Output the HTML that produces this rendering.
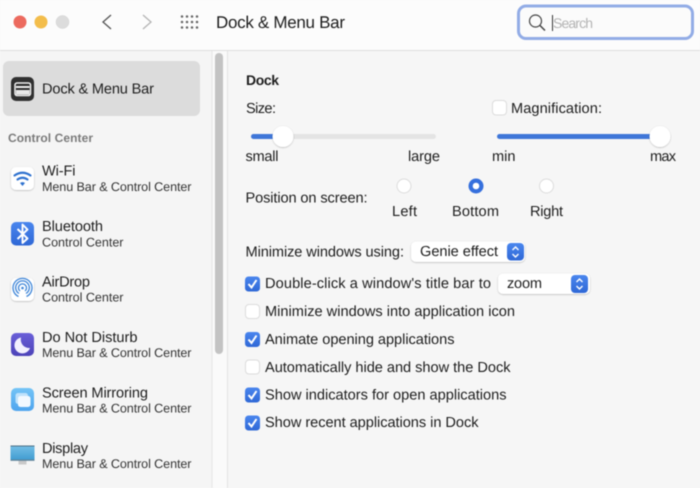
<!DOCTYPE html>
<html>
<head>
<meta charset="utf-8">
<style>
html,body{margin:0;padding:0;width:700px;height:488px;overflow:hidden;background:#f6f6f6}
svg{display:block;filter:blur(.4px)}
text{font-family:"Liberation Sans",sans-serif;fill:#1e1e1e;font-size:14.6px;text-rendering:geometricPrecision}
.s{font-size:12.6px;fill:#333}
.t{font-size:14.6px}
.b{font-weight:bold}
</style>
</head>
<body>
<svg width="700" height="488" viewBox="0 0 700 488" xmlns="http://www.w3.org/2000/svg">
<defs>
<linearGradient id="blue" x1="0" y1="0" x2="0" y2="1"><stop offset="0" stop-color="#4a86ee"/><stop offset="1" stop-color="#2f68d6"/></linearGradient>
<linearGradient id="purple" x1="0" y1="0" x2="0" y2="1"><stop offset="0" stop-color="#6a5fd8"/><stop offset="1" stop-color="#4c43b8"/></linearGradient>
<linearGradient id="sky" x1="0" y1="0" x2="0" y2="1"><stop offset="0" stop-color="#74c4f6"/><stop offset="1" stop-color="#4ea4ee"/></linearGradient>
<linearGradient id="disp" x1="0" y1="0" x2="0" y2="1"><stop offset="0" stop-color="#75bfe6"/><stop offset="1" stop-color="#3f9bd0"/></linearGradient>
<filter id="sh" x="-30%" y="-30%" width="160%" height="160%"><feDropShadow dx="0" dy=".6" stdDeviation=".7" flood-color="#000" flood-opacity=".28"/></filter>
</defs>

<!-- backgrounds -->
<rect width="700" height="488" fill="#f6f6f6"/>
<rect width="700" height="50" fill="#fcfcfc"/>
<rect y="50" width="700" height="1" fill="#dedede"/>
<rect x="0" y="51" width="212" height="437" fill="#f5f5f5"/>
<rect x="212" y="51" width="15" height="437" fill="#fafafa"/>
<rect x="211.5" y="51" width="1" height="437" fill="#e6e6e6"/>
<rect x="227" y="51" width="1" height="437" fill="#e2e2e2"/>
<rect x="215" y="53" width="8" height="301" rx="4" fill="#c3c3c3"/>

<!-- traffic lights -->
<circle cx="20" cy="22" r="6.5" fill="#ec6a5e"/>
<circle cx="41" cy="22" r="6.5" fill="#f3bd4b"/>
<circle cx="62.500" cy="22" r="6.5" fill="#dcdcdc" stroke="#d2d2d2" stroke-width=".5"/>

<!-- nav -->
<path d="M111 15 L103 22 L111 29" fill="none" stroke="#555" stroke-width="1.300"/>
<path d="M143 15 L151 22 L143 29" fill="none" stroke="#b4b4b4" stroke-width="1.300"/>
<g fill="#666">
<circle cx="182" cy="16.500" r="1.250"/><circle cx="187" cy="16.500" r="1.250"/><circle cx="192" cy="16.500" r="1.250"/><circle cx="197" cy="16.500" r="1.250"/>
<circle cx="182" cy="22" r="1.250"/><circle cx="187" cy="22" r="1.250"/><circle cx="192" cy="22" r="1.250"/><circle cx="197" cy="22" r="1.250"/>
<circle cx="182" cy="27.500" r="1.250"/><circle cx="187" cy="27.500" r="1.250"/><circle cx="192" cy="27.500" r="1.250"/><circle cx="197" cy="27.500" r="1.250"/>
</g>
<text x="216" y="28" style="font-size:17px" textLength="129" lengthAdjust="spacing">Dock &amp; Menu Bar</text>

<!-- search -->
<rect x="518.500" y="6" width="174" height="32.500" rx="7.500" fill="#fbfbfb" stroke="#92ace6" stroke-width="3"/>
<circle cx="535.500" cy="21" r="6" fill="none" stroke="#444" stroke-width="1.200"/>
<path d="M540 25.500 L545 30.500" stroke="#444" stroke-width="1.500"/>
<rect x="552" y="15" width="1" height="16" fill="#333"/>
<text x="553" y="28" style="font-size:14px;fill:#b4b4b4" textLength="40" lengthAdjust="spacing">Search</text>

<!-- sidebar -->
<rect x="3" y="61" width="197" height="55" rx="6" fill="#dcdcdc"/>
<rect x="11" y="77" width="23" height="24" rx="5" fill="#303030"/>
<rect x="15" y="83" width="15.500" height="12.500" rx="2" fill="#2b2b2b" stroke="#f2f2f2" stroke-width="1.500"/>
<rect x="16" y="86" width="13.500" height="2" fill="#f2f2f2"/>
<rect x="16" y="90" width="13.500" height="4.500" fill="#e8e8e8"/>
<text x="42" y="93.500" class="t" textLength="112" lengthAdjust="spacing">Dock &amp; Menu Bar</text>

<text x="8" y="142" class="b" style="font-size:12px;fill:#7a7a7a" textLength="85" lengthAdjust="spacing">Control Center</text>

<!-- wifi -->
<rect x="11" y="167" width="23" height="23" rx="5" fill="#fff" filter="url(#sh)"/>
<path d="M14.500 175.500 Q22.500 170 30.500 175.500" fill="none" stroke="#2f72cf" stroke-width="2.100" stroke-linecap="round"/>
<path d="M17.500 179.500 Q22.500 176 27.500 179.500" fill="none" stroke="#2f72cf" stroke-width="2.100" stroke-linecap="round"/>
<path d="M20 183 L22.500 186 L25 183 Q22.500 181.200 20 183 Z" fill="#2f72cf"/>
<text x="42" y="175.500" class="t" textLength="33.500" lengthAdjust="spacing">Wi-Fi</text>
<text x="42" y="191" class="s" textLength="149.500" lengthAdjust="spacing">Menu Bar &amp; Control Center</text>

<!-- bluetooth -->
<rect x="11" y="222" width="23" height="23.500" rx="5" fill="url(#blue)"/>
<path d="M17.500 229 L27.500 238.500 L22.500 243 L22.500 224.500 L27.500 229.500 L17.500 239" fill="none" stroke="#fff" stroke-width="1.900" stroke-linejoin="round"/>
<text x="42" y="231" class="t" textLength="61" lengthAdjust="spacing">Bluetooth</text>
<text x="42" y="246.500" class="s" textLength="81.500" lengthAdjust="spacing">Control Center</text>

<!-- airdrop -->
<rect x="11" y="278" width="23" height="23" rx="5" fill="#fff" filter="url(#sh)"/>
<g fill="none" stroke="#3f86d8">
<path d="M18.500 296.500 A9.500 9.500 0 1 1 26.500 296.500" stroke-width="1.300"/>
<path d="M19 293.500 A6.800 6.800 0 1 1 26 293.500" stroke-width="1.300"/>
<path d="M20 291 A4 4 0 1 1 25 291" stroke-width="1.300"/>
</g>
<circle cx="22.500" cy="288" r="1.300" fill="#3f86d8"/>
<text x="42" y="286.500" class="t" textLength="48" lengthAdjust="spacing">AirDrop</text>
<text x="42" y="301.500" class="s" textLength="81.500" lengthAdjust="spacing">Control Center</text>

<!-- dnd -->
<rect x="11" y="333" width="23" height="23" rx="5" fill="url(#purple)"/>
<path d="M21 337.500 A8 8 0 1 0 30 348 A8.500 8.500 0 0 1 21 337.500 Z" fill="#f3f1ff"/>
<text x="42" y="342" class="t" textLength="95.500" lengthAdjust="spacing">Do Not Disturb</text>
<text x="42" y="357" class="s" textLength="149.500" lengthAdjust="spacing">Menu Bar &amp; Control Center</text>

<!-- mirroring -->
<rect x="11" y="388" width="23" height="23" rx="5" fill="url(#sky)"/>
<rect x="15.500" y="393" width="12.500" height="11" rx="2.500" fill="#bfe2fb"/>
<rect x="18" y="396" width="12.500" height="11" rx="2.500" fill="#f2f9ff"/>
<text x="42" y="397.500" class="t" textLength="106" lengthAdjust="spacing">Screen Mirroring</text>
<text x="42" y="412.500" class="s" textLength="149.500" lengthAdjust="spacing">Menu Bar &amp; Control Center</text>

<!-- display -->
<rect x="18.500" y="459" width="8" height="5.500" fill="#c9c9c9"/>
<rect x="10.500" y="445.500" width="24" height="15" rx="1" fill="url(#disp)"/>
<rect x="10.500" y="445.500" width="24" height="1" fill="#4d6f85"/>
<rect x="10.500" y="459.500" width="24" height="1.300" fill="#5d8198"/>
<text x="42" y="453" class="t" textLength="46" lengthAdjust="spacing">Display</text>
<text x="42" y="468" class="s" textLength="149.500" lengthAdjust="spacing">Menu Bar &amp; Control Center</text>

<!-- content -->
<text x="246" y="85" class="b" style="font-size:14px" textLength="33" lengthAdjust="spacing">Dock</text>
<text x="246" y="113" class="t" textLength="30" lengthAdjust="spacing">Size:</text>

<rect x="492.500" y="100.500" width="14" height="14.500" rx="3.500" fill="#fff" stroke="#dcdcdc"/>
<text x="511" y="113" class="t" textLength="91" lengthAdjust="spacing">Magnification:</text>

<!-- sliders -->
<rect x="251" y="134" width="185" height="5" rx="2.500" fill="#e4e4e4"/>
<rect x="251" y="134" width="30" height="5" rx="2.500" fill="#3f76d8"/>
<circle cx="283" cy="136.500" r="10.500" fill="#fff" filter="url(#sh)"/>
<text x="245.500" y="161" class="t" textLength="33" lengthAdjust="spacing">small</text>
<text x="408" y="161" class="t" textLength="32" lengthAdjust="spacing">large</text>

<rect x="497" y="134" width="160" height="5" rx="2.500" fill="#3f76d8"/>
<circle cx="660" cy="136.500" r="10.500" fill="#fff" filter="url(#sh)"/>
<text x="492" y="161" class="t" textLength="23.500" lengthAdjust="spacing">min</text>
<text x="650" y="161" class="t" textLength="26" lengthAdjust="spacing">max</text>

<!-- radios -->
<text x="245.500" y="202.500" class="t" textLength="122" lengthAdjust="spacing">Position on screen:</text>
<circle cx="404" cy="186" r="7" fill="#fff" stroke="#dcdcdc"/>
<circle cx="476" cy="186" r="7.500" fill="#3670dd"/>
<circle cx="476" cy="186" r="3.300" fill="#fff"/>
<circle cx="546.500" cy="186" r="7" fill="#fff" stroke="#dcdcdc"/>
<text x="392" y="216" class="t" textLength="25" lengthAdjust="spacing">Left</text>
<text x="452" y="216" class="t" textLength="47" lengthAdjust="spacing">Bottom</text>
<text x="530" y="216" class="t" textLength="33" lengthAdjust="spacing">Right</text>

<!-- popups -->
<text x="245.500" y="256.500" class="t" textLength="158.500" lengthAdjust="spacing">Minimize windows using:</text>
<rect x="411" y="241.500" width="114" height="20.500" rx="5" fill="#fff" filter="url(#sh)"/>
<text x="420" y="256" class="t" textLength="78" lengthAdjust="spacing">Genie effect</text>
<rect x="507" y="243" width="17" height="17.500" rx="4" fill="url(#blue)"/>
<path d="M512.500 250 L515.500 247 L518.500 250 M512.500 254 L515.500 257 L518.500 254" fill="none" stroke="#fff" stroke-width="1.400"/>

<rect x="245" y="276.500" width="15" height="15" rx="3.500" fill="url(#blue)"/>
<path d="M248.500 284 L251.500 287.500 L256.500 280" fill="none" stroke="#fff" stroke-width="2"/>
<text x="265" y="288" class="t" textLength="226" lengthAdjust="spacing">Double-click a window's title bar to</text>
<rect x="498" y="273.500" width="92" height="20.500" rx="5" fill="#fff" filter="url(#sh)"/>
<text x="507" y="288" class="t" textLength="35" lengthAdjust="spacing">zoom</text>
<rect x="571" y="275" width="17" height="18" rx="4" fill="url(#blue)"/>
<path d="M576.500 282 L579.500 279 L582.500 282 M576.500 286 L579.500 289 L582.500 286" fill="none" stroke="#fff" stroke-width="1.400"/>

<!-- checkboxes -->
<rect x="245.500" y="304.500" width="14" height="14" rx="3.500" fill="#fff" stroke="#dcdcdc"/>
<text x="265" y="316" class="t" textLength="250" lengthAdjust="spacing">Minimize windows into application icon</text>

<rect x="245" y="332" width="15" height="15" rx="3.500" fill="url(#blue)"/>
<path d="M248.500 339.500 L251.500 343 L256.500 335.500" fill="none" stroke="#fff" stroke-width="2"/>
<text x="265" y="344" class="t" textLength="189.500" lengthAdjust="spacing">Animate opening applications</text>

<rect x="245.500" y="360" width="14" height="14" rx="3.500" fill="#fff" stroke="#dcdcdc"/>
<text x="265" y="372" class="t" textLength="245.500" lengthAdjust="spacing">Automatically hide and show the Dock</text>

<rect x="245" y="387.500" width="15" height="15" rx="3.500" fill="url(#blue)"/>
<path d="M248.500 395 L251.500 398.500 L256.500 391" fill="none" stroke="#fff" stroke-width="2"/>
<text x="265" y="399.500" class="t" textLength="241.500" lengthAdjust="spacing">Show indicators for open applications</text>

<rect x="245" y="415.500" width="15" height="15" rx="3.500" fill="url(#blue)"/>
<path d="M248.500 423 L251.500 426.500 L256.500 419" fill="none" stroke="#fff" stroke-width="2"/>
<text x="265" y="427" class="t" textLength="213.500" lengthAdjust="spacing">Show recent applications in Dock</text>
</svg>
</body>
</html>
